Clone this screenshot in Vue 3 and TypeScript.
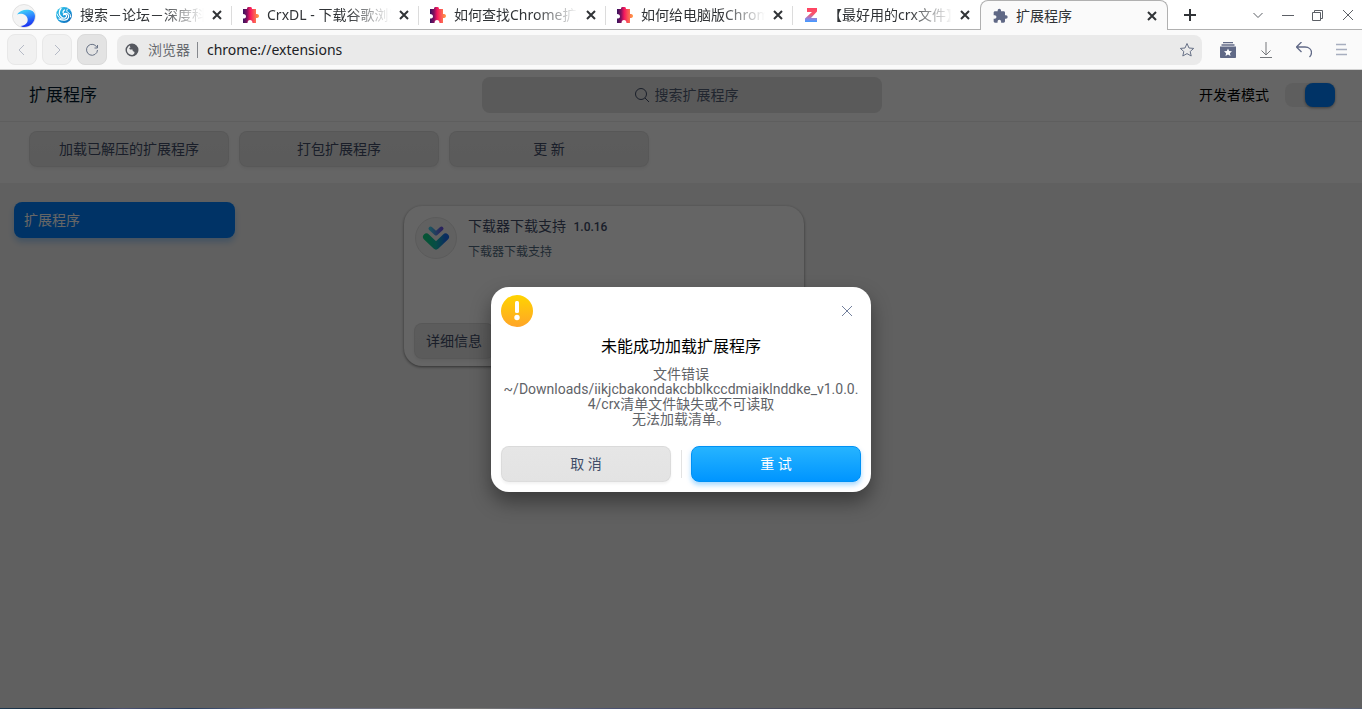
<script setup lang="ts">
import { ref } from 'vue'

interface Tab {
  title: string
  icon: 'deepin' | 'puzzle' | 'z'
}

const tabs: Tab[] = [
  { title: '搜索－论坛－深度科技', icon: 'deepin' },
  { title: 'CrxDL - 下载谷歌浏览器', icon: 'puzzle' },
  { title: '如何查找Chrome扩展', icon: 'puzzle' },
  { title: '如何给电脑版Chrome', icon: 'puzzle' },
  { title: '【最好用的crx文件】', icon: 'z' },
]
const actions = ['加载已解压的扩展程序', '打包扩展程序', '更 新']
const address = ref('chrome://extensions')
const query = ref('')
const devMode = ref(true)
</script>

<template>
  <div class="window">
    <header class="tabstrip">
      <svg class="logo" viewBox="0 0 24 24" aria-hidden="true">
        <defs>
          <linearGradient id="wave" x1="0.2" y1="0" x2="0.5" y2="1">
            <stop offset="0" stop-color="#3fdcf5" />
            <stop offset="0.45" stop-color="#2f8dff" />
            <stop offset="1" stop-color="#1a2cf0" />
          </linearGradient>
        </defs>
        <circle cx="12" cy="12" r="11.5" fill="#f4f4f4" stroke="#e2e2e2" />
        <path d="M5 10.500C7.500 6.500 13 5 17.500 6C21 6.500 23 9 23 12C23 18.500 18 23 12 23C10.500 23 9.500 22.500 8.500 22C13.500 21.500 16.500 18.500 15.500 14.500C14.500 10.500 9.500 8.500 5 10.500Z" fill="url(#wave)" />
      </svg>
      <nav class="tabs" aria-label="标签页">
        <div v-for="(tab, i) in tabs" :key="i" class="tab">
          <svg v-if="tab.icon === 'deepin'" class="favicon" viewBox="0 0 16 16" aria-hidden="true">
            <defs>
              <linearGradient id="swirl" x1="0" x2="1" y1="0" y2="1">
                <stop offset="0" stop-color="#3ccdea" />
                <stop offset="0.500" stop-color="#1a9ddd" />
                <stop offset="1" stop-color="#0d5fb0" />
              </linearGradient>
            </defs>
            <circle cx="8" cy="8" r="8" fill="url(#swirl)" />
            <path d="M5 1.500C2.500 4 2.500 8.500 6 10.500C8.500 12 11 10.500 10.500 8.500C10 7 8.500 7 7.500 7.800" fill="none" stroke="#fff" stroke-width="1.300" stroke-linecap="round" />
            <path d="M8.500 3C6.500 4.500 6.500 6.500 8.500 6.500C11 6 13.500 7.500 12.500 10.500C11.500 13.500 7 14 3 12" fill="none" stroke="#fff" stroke-width="1.200" stroke-linecap="round" />
            <path d="M12 1.500C10 3 10.500 4.500 12 5.500C14 6.500 15 8 14.500 10M1 7C2 10 4 12 7 12" fill="none" stroke="#fff" stroke-width="1" stroke-linecap="round" />
          </svg>
          <svg v-else-if="tab.icon === 'puzzle'" class="favicon" viewBox="0 0 16 16" aria-hidden="true">
            <defs>
              <linearGradient id="crx" x1="0" x2="1" y1="0.300" y2="0.300">
                <stop offset="0" stop-color="#35145e" />
                <stop offset="0.250" stop-color="#82105f" />
                <stop offset="0.450" stop-color="#f5175e" />
                <stop offset="0.650" stop-color="#fb4c58" />
                <stop offset="1" stop-color="#ffa146" />
              </linearGradient>
            </defs>
            <path d="M0 2H4C4 0 5 0 6.500 0S9 0 9 2H13V7C15 7 16 7.500 16 9S15 11 13 11V16H9.500C9.500 14 8.500 13 7 13S4.500 14 4.500 16H0V11.500C2 11.500 3 11 3 9.500S2 7 0 7Z" fill="url(#crx)" />
          </svg>
          <svg v-else class="favicon" viewBox="0 0 16 16" aria-hidden="true">
            <defs>
              <linearGradient id="zed" x1="0" x2="0" y1="0" y2="1">
                <stop offset="0" stop-color="#ff4260" />
                <stop offset="0.450" stop-color="#f8566f" />
                <stop offset="0.800" stop-color="#8289ea" />
                <stop offset="1" stop-color="#3f9cff" />
              </linearGradient>
            </defs>
            <path d="M3 1H13V4.500L7 11H13V15H1V11.500L8 5H3Z" fill="url(#zed)" />
          </svg>
          <span class="tab-title">{{ tab.title }}</span>
          <button class="tab-close" aria-label="关闭标签页">
            <svg viewBox="0 0 10 10"><path d="M1 1L9 9M9 1L1 9" /></svg>
          </button>
        </div>
        <div class="tab active" aria-current="page">
          <svg class="favicon" viewBox="0 0 24 24" aria-hidden="true">
            <path fill="#5f6885" d="M21 11h-1.500V7c0-1.100-.9-2-2-2h-4V3.500a2.500 2.500 0 0 0-5 0V5h-4c-1.100 0-2 .9-2 2v3.800H4a2.700 2.700 0 0 1 0 5.400H2.500V20c0 1.100.9 2 2 2h3.800v-1.500a2.700 2.700 0 0 1 5.400 0V22h3.800c1.100 0 2-.9 2-2v-4H21a2.500 2.500 0 0 0 0-5Z" />
          </svg>
          <span class="tab-title">扩展程序</span>
          <button class="tab-close" aria-label="关闭标签页">
            <svg viewBox="0 0 10 10"><path d="M1 1L9 9M9 1L1 9" /></svg>
          </button>
        </div>
      </nav>
      <button class="new-tab" aria-label="新建标签页">
        <svg viewBox="0 0 12 12"><path d="M6 0V12M0 6H12" /></svg>
      </button>
      <div class="controls">
        <button aria-label="标签页列表"><svg viewBox="0 0 12 12"><path d="M1.500 4L6 8.500L10.500 4" /></svg></button>
        <button aria-label="最小化"><svg viewBox="0 0 12 12"><path d="M0 6.500H12" /></svg></button>
        <button aria-label="还原"><svg viewBox="0 0 12 12"><path d="M.5 3.500H8.500V11.500H.5ZM2.500 3V1.500H10.500V9.500H9" /></svg></button>
        <button aria-label="关闭"><svg viewBox="0 0 12 12"><path d="M1 1L11 11M11 1L1 11" /></svg></button>
      </div>
    </header>

    <div class="toolbar">
      <button class="nav-btn" disabled aria-label="后退"><svg viewBox="0 0 14 14"><path d="M9 2L4 7L9 12" /></svg></button>
      <button class="nav-btn" disabled aria-label="前进"><svg viewBox="0 0 14 14"><path d="M5 2L10 7L5 12" /></svg></button>
      <button class="nav-btn reload" aria-label="重新加载">
        <svg viewBox="0 0 14 14"><path d="M12 4.500A5.500 5.500 0 1 0 12.500 7M12.500 2V5H9.500" /></svg>
      </button>
      <div class="omnibox">
        <svg class="site" viewBox="0 0 14 14" aria-hidden="true">
          <circle cx="7" cy="7" r="5.800" fill="none" stroke="#55585f" stroke-width="1.400" />
          <path d="M4.500 2.500C7 .8 11 1.500 12.500 5C13.500 9 11 12 7.500 12.500C9.500 10.500 10 9.500 9 8.500C8 8.500 7.500 8 7.500 6.500H5C4 5.500 4 4.500 5.500 4.500Z" fill="#55585f" />
        </svg>
        <label class="scheme" for="address">浏览器</label>
        <input id="address" v-model="address" class="address" type="text" />
        <button class="bookmark" aria-label="添加书签">
          <svg viewBox="0 0 16 16"><path d="M8 1.500L10 6L14.700 6.400L11.200 9.500L12.200 14L8 11.600L3.800 14L4.800 9.500L1.300 6.400L6 6Z" /></svg>
        </button>
      </div>
      <div class="tools">
        <button aria-label="收藏">
          <svg viewBox="0 0 16 16"><path d="M3 .5H13M1.500 3H14.500" stroke-width="1.300" /><path d="M0 4.500H16V15C16 15.600 15.600 16 15 16H1C.4 16 0 15.600 0 15Z" fill="#616a87" stroke="none" /><path d="M8 6.500L9.200 9L12 9.300L9.900 11.200L10.500 14L8 12.600L5.500 14L6.100 11.200L4 9.300L6.800 9Z" fill="#fff" stroke="none" /></svg>
        </button>
        <button class="gray" aria-label="下载"><svg viewBox="0 0 16 16"><path d="M8 0V13M3.500 8.500L8 13L12.500 8.500M2 15.500H14" /></svg></button>
        <button aria-label="撤销"><svg viewBox="0 0 16 16"><path d="M5.500 0L.5 5L5.500 10M.5 5H9C13 5 15.500 7.500 15.500 10.500C15.500 12.500 14.500 14 13.500 15" stroke-width="1.300" /></svg></button>
        <button class="pale" aria-label="菜单"><svg viewBox="0 0 16 16"><path d="M2 2.500H12M2 7.500H13M2 12.500H13" stroke-width="1.500" /></svg></button>
      </div>
    </div>

    <main class="page">
      <header class="page-head">
        <h1>扩展程序</h1>
        <label class="search">
          <svg viewBox="0 0 16 16" aria-hidden="true"><circle cx="7" cy="7" r="5.500" /><path d="M11 11L15 15" /></svg>
          <input v-model="query" type="text" placeholder="搜索扩展程序" aria-label="搜索扩展程序" />
        </label>
        <label class="dev">
          <span>开发者模式</span>
          <input v-model="devMode" type="checkbox" role="switch" />
        </label>
      </header>
      <div class="actions">
        <button v-for="a in actions" :key="a" class="btn">{{ a }}</button>
      </div>
      <div class="body">
        <aside><a href="#" class="side-link">扩展程序</a></aside>
        <section class="list">
          <article class="card">
            <div class="info">
              <svg class="ext-icon" viewBox="0 0 42 42" aria-hidden="true">
                <defs>
                  <linearGradient id="arrow-big"><stop offset="0" stop-color="#10d285" /><stop offset="0.500" stop-color="#12bfb0" /><stop offset="1" stop-color="#1a70f0" /></linearGradient>
                  <linearGradient id="arrow-small"><stop offset="0" stop-color="#45cdee" /><stop offset="1" stop-color="#6a55e8" /></linearGradient>
                </defs>
                <circle cx="21" cy="21" r="20.500" fill="#f2f2f2" stroke="#e2e2e2" />
                <path d="M15.500 11.500L21 16.500L26.500 11.500" fill="none" stroke="url(#arrow-small)" stroke-width="4" stroke-linecap="round" stroke-linejoin="round" />
                <path d="M11.500 20L21 29L30.500 20" fill="none" stroke="url(#arrow-big)" stroke-width="7" stroke-linecap="round" stroke-linejoin="round" />
              </svg>
              <div>
                <h2>下载器下载支持 <small>1.0.16</small></h2>
                <p>下载器下载支持</p>
              </div>
            </div>
            <button class="btn detail">详细信息</button>
          </article>
        </section>
      </div>

      <div class="scrim">
        <div class="dialog" role="alertdialog" aria-modal="true" aria-labelledby="err-title" aria-describedby="err-text">
          <div class="dialog-top">
            <svg class="warn" viewBox="0 0 32 32" aria-hidden="true">
              <defs><linearGradient id="amber" x1="0" x2="0" y1="0" y2="1"><stop offset="0" stop-color="#ffd400" /><stop offset="1" stop-color="#ffa528" /></linearGradient></defs>
              <circle cx="16" cy="16" r="16" fill="url(#amber)" />
              <rect x="14" y="6" width="4" height="12" rx="1.500" fill="#fff" />
              <circle cx="16" cy="22.500" r="2.700" fill="#fff" />
            </svg>
            <button class="dialog-close" aria-label="关闭对话框"><svg viewBox="0 0 12 12"><path d="M1 1L11 11M11 1L1 11" /></svg></button>
          </div>
          <h2 id="err-title">未能成功加载扩展程序</h2>
          <p id="err-text">文件错误<br />~/Downloads/iikjcbakondakcbblkccdmiaiklnddke_v1.0.0.<wbr />4/crx清单文件缺失或不可读取<br />无法加载清单。</p>
          <div class="dialog-actions">
            <button class="btn">取 消</button>
            <span class="rule"></span>
            <button class="btn primary">重 试</button>
          </div>
        </div>
      </div>
    </main>
    <div class="desktop-edge"></div>
  </div>
</template>

<style>
body {
  margin: 0;
  overflow: hidden;
}
</style>

<style scoped>
* {
  box-sizing: border-box;
}
.window {
  display: flex;
  flex-direction: column;
  height: 100vh;
  background: #fafafa;
  color: #303336;
  font: 14px/20px "Noto Sans", "Noto Sans CJK SC", sans-serif;
}
h1, h2, p {
  margin: 0;
  font-weight: 400;
}
button {
  display: flex;
  align-items: center;
  justify-content: center;
  padding: 0;
  border: 0;
  background: none;
  color: inherit;
  font: inherit;
}
input {
  padding: 0;
  border: 0;
  outline: 0;
  background: none;
  font: inherit;
}
svg {
  display: block;
  flex: none;
}
button svg, .search svg {
  fill: none;
  stroke: currentColor;
}

.tabstrip {
  display: flex;
  height: 30px;
  background: linear-gradient(#b0b0b0, #b0b0b0) bottom / 100% 1px no-repeat #fff;
}
.logo {
  width: 24px;
  height: 24px;
  margin: 4px 9px 0 12px;
}
.tabs {
  display: flex;
  flex: 0 1 1123px;
  min-width: 0;
}
.tab {
  display: flex;
  flex: 0 1 187px;
  align-items: center;
  min-width: 0;
  padding: 0 9px 0 11px;
  background: linear-gradient(#dcdcdc, #dcdcdc) right 6px / 1px 19px no-repeat;
}
.tab:nth-child(5) {
  background: none;
}
.tab.active {
  flex-basis: 188px;
  border: 1px solid #b0b0b0;
  border-bottom: 0;
  border-radius: 8px 8px 0 0;
  background: #fafafa;
}
.favicon {
  width: 16px;
  height: 16px;
  margin-right: 8px;
}
.tab-title {
  flex: 1;
  min-width: 0;
  overflow: hidden;
  white-space: nowrap;
}
.tab:not(.active) .tab-title {
  -webkit-mask-image: linear-gradient(90deg, #000 65%, transparent);
  mask-image: linear-gradient(90deg, #000 65%, transparent);
}
.tab-close {
  width: 12px;
  height: 20px;
  margin-left: 7px;
}
.tab-close svg {
  width: 10px;
  height: 10px;
  stroke-width: 2;
}
.new-tab {
  width: 44px;
}
.new-tab svg {
  width: 12px;
  height: 12px;
  stroke-width: 2;
}
.controls {
  display: flex;
  margin-left: auto;
  gap: 18px;
  padding-right: 8px;
  color: #5c6066;
}
.controls svg {
  width: 12px;
  height: 12px;
}

.toolbar {
  display: flex;
  align-items: center;
  height: 40px;
  padding: 0 12px 0 7px;
  border-bottom: 1px solid #d2d2d2;
}
.nav-btn {
  width: 30px;
  height: 31px;
  margin-right: 5px;
  border: 1px solid #e8e8e8;
  border-radius: 8px;
  background: #f1f1f1;
  color: #b5bac6;
}
.nav-btn svg {
  width: 14px;
  height: 14px;
}
.reload {
  margin-right: 10px;
  border-color: #dadada;
  background: #e3e3e3;
  color: #697386;
}
.omnibox {
  display: flex;
  flex: 1;
  align-items: center;
  height: 30px;
  padding: 0 7px 0 8px;
  border-radius: 8px;
  background: #eaeaea;
}
.site {
  width: 14px;
  height: 14px;
  margin-right: 9px;
}
.scheme {
  padding-right: 8px;
  background: linear-gradient(#85888d, #85888d) right 2px / 1px 16px no-repeat;
  color: #686b70;
}
.address {
  flex: 1;
  min-width: 0;
  margin-left: 9px;
  color: #202124;
}
.bookmark {
  color: #667086;
}
.bookmark svg {
  width: 16px;
  height: 16px;
}
.tools {
  display: flex;
  gap: 22px;
  margin-left: 18px;
  color: #616a87;
}
.tools svg {
  width: 16px;
  height: 16px;
}
.tools .gray {
  color: #74777b;
}
.tools .pale {
  color: #a7aebf;
}

.page {
  position: relative;
  display: flex;
  flex: 1;
  flex-direction: column;
  min-height: 0;
  background: #f0f0f0;
  color: #414d68;
  font-family: Roboto, "Noto Sans CJK SC", sans-serif;
}
.page-head {
  display: grid;
  grid-template-columns: 1fr 400px 1fr;
  align-items: center;
  height: 52px;
  padding: 0 27px 1px 29px;
  border-bottom: 1px solid #eaeaea;
  background: #fcfcfc;
}
h1 {
  color: #001a2e;
  font-size: 17px;
  line-height: 24px;
}
.search {
  display: flex;
  align-items: center;
  justify-content: center;
  gap: 5px;
  height: 36px;
  padding-left: 8px;
  border-radius: 8px;
  background: #e0e0e0;
}
.search svg {
  width: 16px;
  height: 16px;
}
.search input {
  width: 84px;
}
.search input::placeholder {
  color: #536076;
  opacity: 1;
}
.dev {
  display: flex;
  align-items: center;
  justify-content: flex-end;
  gap: 16px;
  color: #000;
}
.dev input {
  width: 50px;
  height: 24px;
  margin: 0;
  border-radius: 8px;
  appearance: none;
  background: #ebebeb;
}
.dev input::before {
  display: block;
  width: 30px;
  height: 24px;
  border-radius: 8px;
  background: #0081ff;
  box-shadow: 0 1px 3px rgba(0, 0, 0, 0.4);
  content: "";
}
.dev input:checked::before {
  margin-left: auto;
}
.actions {
  display: flex;
  gap: 10px;
  padding: 9px 29px 16px;
  background: #fcfcfc;
}
.btn {
  width: 200px;
  height: 36px;
  border: 1px solid rgba(0, 0, 0, 0.04);
  border-radius: 8px;
  background: linear-gradient(#e6e6e6, #e3e3e3);
  box-shadow: 0 2px 3px rgba(0, 0, 0, 0.05);
  color: #414d68;
}
.body {
  display: grid;
  grid-template-columns: 249px 1fr;
  flex: 1;
}
aside {
  padding: 19px 14px;
}
.side-link {
  display: block;
  padding: 8px 10px;
  border-radius: 8px;
  background: #0081ff;
  box-shadow: 0 4px 6px rgba(0, 129, 255, 0.3);
  color: #fff;
  text-decoration: none;
}
.list {
  padding: 23px 155px;
}
.card {
  display: flex;
  flex-direction: column;
  justify-content: space-between;
  width: 400px;
  height: 160px;
  padding: 10px 10px 7px;
  border-radius: 18px;
  background: #fcfcfc;
  box-shadow: 0 1px 3px rgba(0, 0, 0, 0.5);
}
.info {
  display: flex;
  gap: 11px;
}
.ext-icon {
  width: 42px;
  height: 42px;
  margin: 1px 0 0 1px;
}
.info h2 {
  font-size: 14px;
}
.info small {
  margin-left: 4px;
  font-size: 12px;
  font-weight: 500;
}
.info p {
  margin-top: 5px;
  color: #526a7f;
  font-size: 12px;
}
.detail {
  width: 80px;
}

.scrim {
  position: absolute;
  inset: 0;
  display: flex;
  align-items: center;
  justify-content: center;
  background: rgba(0, 0, 0, 0.6);
}
.dialog {
  width: 380px;
  padding: 8px 10px 10px;
  border-radius: 18px;
  background: #fff;
  box-shadow: 0 10px 20px rgba(0, 0, 0, 0.4);
  text-align: center;
}
.dialog-top {
  display: flex;
  align-items: center;
  justify-content: space-between;
  padding-right: 8px;
}
.warn {
  width: 32px;
  height: 32px;
}
.dialog-close {
  color: #73809c;
}
.dialog-close svg {
  width: 12px;
  height: 12px;
}
.dialog h2 {
  margin-top: 10px;
  color: #000;
  font-size: 16px;
  line-height: 20px;
}
.dialog p {
  margin-top: 10px;
  color: #5f6368;
  line-height: 15px;
}
.dialog-actions {
  display: flex;
  align-items: center;
  justify-content: space-between;
  margin-top: 19px;
}
.dialog-actions .btn {
  width: 170px;
}
.dialog-actions .primary {
  border-color: #0091f5;
  background: linear-gradient(#26b4ff, #0095ff);
  box-shadow: 0 3px 5px rgba(0, 145, 255, 0.35);
  color: #fff;
}
.rule {
  width: 1px;
  height: 28px;
  background: #e3e3e3;
}
.desktop-edge {
  height: 1px;
  background: linear-gradient(90deg, #1d3850, #18293b 5%, #4b5272 9%, #293e60 14%, #686d8c 20%, #777 35%, #4b5272 45%, #484850 65%, #22323e 80%, #6c7080 95%, #555d71);
}
</style>
